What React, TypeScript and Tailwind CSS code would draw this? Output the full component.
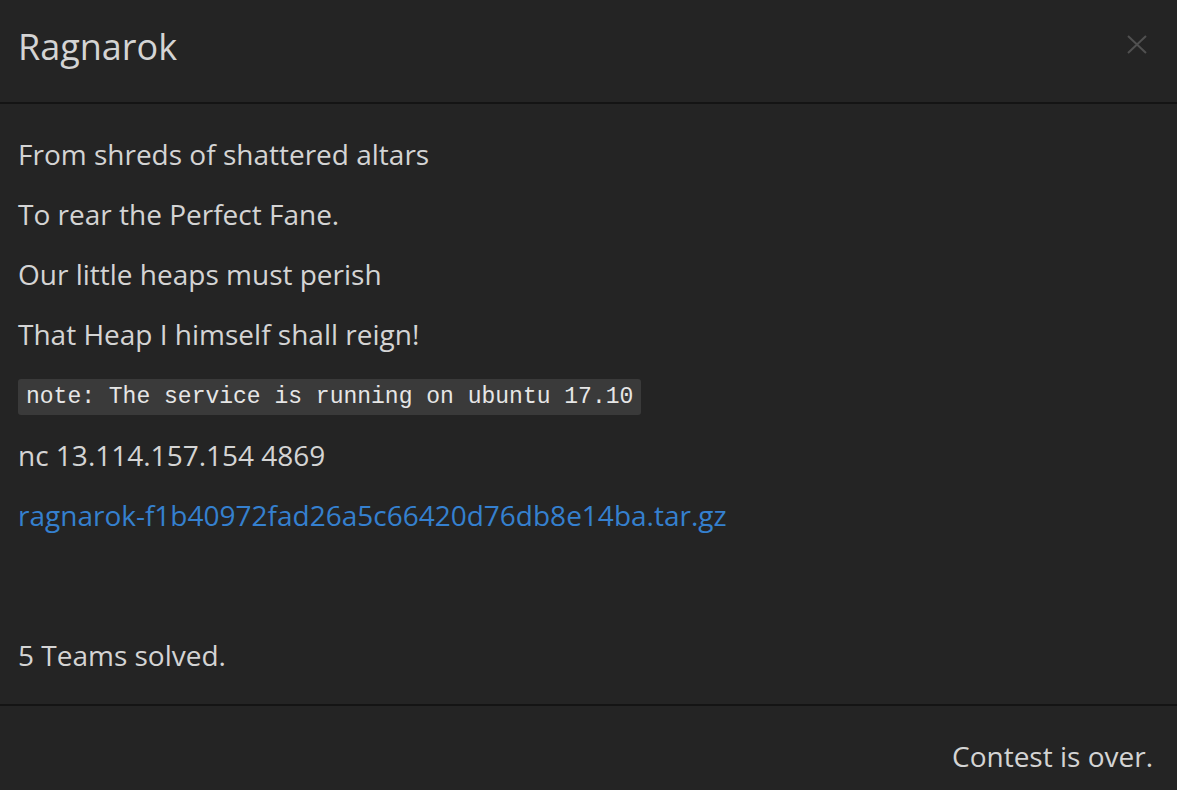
export default function App() {
  return (
    <div className="w-[1177px] h-[790px] bg-[#242424] text-[#d4d4d4] font-['Open_Sans',sans-serif] overflow-hidden">
      {/* header */}
      <div className="h-[104px] border-b-2 border-[#141414] px-[18px] flex items-start justify-between">
        <h4 className="text-[36px] leading-[48px] pt-[23px]">Ragnarok</h4>
        <button className="mt-[35px] mr-[12px] w-[20px] h-[19px] text-[#505050]">
          <svg viewBox="0 0 20 19" className="w-[20px] h-[19px]" fill="none" stroke="currentColor" strokeWidth="2">
            <path d="M1 1L19 18M19 1L1 18" />
          </svg>
        </button>
      </div>

      {/* body */}
      <div className="h-[602px] border-b-2 border-[#141414] px-[18px] pt-[20px] text-[28px]">
        <p className="leading-[60px]">From shreds of shattered altars</p>
        <p className="leading-[60px]">To rear the Perfect Fane.</p>
        <p className="leading-[60px]">Our little heaps must perish</p>
        <p className="leading-[60px]">That Heap I himself shall reign!</p>
        <div className="mt-[15px] mb-[10px] h-[36px] flex">
          <code className="inline-block bg-[#3a3a3a] rounded-[3px] px-[8px] h-[36px] leading-[36px] text-[23px] text-[#e6e6e6] font-['Liberation_Mono',monospace]">
            note: The service is running on ubuntu 17.10
          </code>
        </div>
        <p className="leading-[60px]">nc 13.114.157.154 4869</p>
        <p className="leading-[60px]">
          <a href="#" className="text-[#3580cf]">ragnarok-f1b40972fad26a5c66420d76db8e14ba.tar.gz</a>
        </p>
        <p className="leading-[60px] mt-[80px]">5 Teams solved.</p>
      </div>

      {/* footer */}
      <div className="px-[24px] flex justify-end pt-[27px]">
        <span className="text-[28px] leading-[46px]">Contest is over.</span>
      </div>
    </div>
  );
}
